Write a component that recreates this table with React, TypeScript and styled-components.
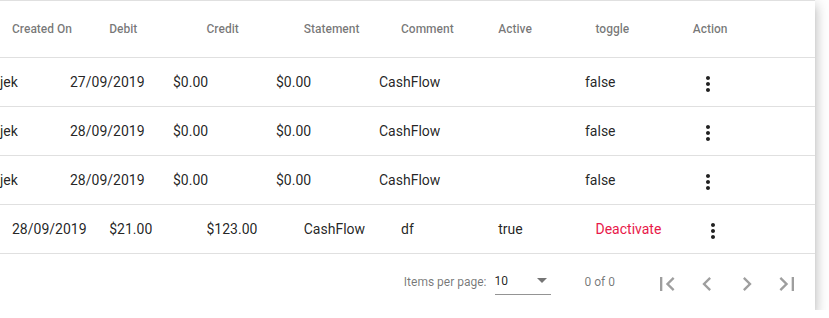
import styled, { createGlobalStyle } from "styled-components";

const GlobalStyle = createGlobalStyle`
  html, body {
    margin: 0;
    padding: 0;
    background: #fff;
    font-family: Roboto, "Helvetica Neue", sans-serif;
  }
`;

const Card = styled.div`
  width: 815px;
  background: #fff;
  border-top: 1px solid rgba(0, 0, 0, 0.12);
  box-shadow: 0 5px 5px -3px rgba(0, 0, 0, 0.2), 0 8px 10px 1px rgba(0, 0, 0, 0.14),
    0 3px 14px 2px rgba(0, 0, 0, 0.12);
`;

const Row = styled.div<{ $header?: boolean; $offset?: number }>`
  display: flex;
  align-items: center;
  height: ${(p) => (p.$header ? 56 : 48)}px;
  padding-left: ${(p) => p.$offset ?? 0}px;
  border-bottom: 1px solid rgba(0, 0, 0, 0.12);
  box-sizing: content-box;
`;

const HeaderCell = styled.div<{ $w: number }>`
  flex: 0 0 ${(p) => p.$w}px;
  font-size: 12px;
  font-weight: 500;
  color: rgba(0, 0, 0, 0.54);
  white-space: nowrap;
`;

const Cell = styled.div<{ $w: number; $warn?: boolean }>`
  flex: 0 0 ${(p) => p.$w}px;
  font-size: 14px;
  color: ${(p) => (p.$warn ? "#e8194a" : "rgba(0, 0, 0, 0.87)")};
  white-space: nowrap;
  display: flex;
  align-items: center;
`;

const IconButton = styled.button`
  width: 40px;
  height: 40px;
  margin-top: 3px;
  padding: 0;
  border: 0;
  background: transparent;
  display: flex;
  align-items: center;
  justify-content: center;
  color: rgba(0, 0, 0, 0.87);
  cursor: pointer;
`;

const Paginator = styled.div`
  display: flex;
  align-items: center;
  justify-content: flex-end;
  height: 56px;
  padding-right: 8px;
  font-size: 12px;
  color: rgba(0, 0, 0, 0.54);
`;

const PageSizeLabel = styled.span`
  margin-right: 8px;
`;

const SelectField = styled.div`
  width: 56px;
  display: flex;
  align-items: center;
  justify-content: space-between;
  padding: 4px 0 6px;
  line-height: 14px;
  border-bottom: 1px solid rgba(0, 0, 0, 0.42);
  color: rgba(0, 0, 0, 0.87);
`;

const Arrow = styled.span`
  width: 0;
  height: 0;
  margin-right: 4px;
  border-left: 5px solid transparent;
  border-right: 5px solid transparent;
  border-top: 5px solid rgba(0, 0, 0, 0.54);
`;

const RangeLabel = styled.span`
  margin: 0 32px 0 34px;
`;

const NavButton = styled.button`
  width: 40px;
  height: 40px;
  padding: 0;
  margin-top: 3px;
  border: 0;
  background: transparent;
  display: flex;
  align-items: center;
  justify-content: center;
  color: rgba(0, 0, 0, 0.38);
`;

const MoreVert = () => (
  <svg width="24" height="24" viewBox="0 0 24 24" fill="currentColor">
    <path d="M12 8c1.1 0 2-.9 2-2s-.9-2-2-2-2 .9-2 2 .9 2 2 2zm0 2c-1.1 0-2 .9-2 2s.9 2 2 2 2-.9 2-2-.9-2-2-2zm0 6c-1.1 0-2 .9-2 2s.9 2 2 2 2-.9 2-2-.9-2-2-2z" />
  </svg>
);

const navIcons = [
  "M18.41 16.59L13.82 12l4.59-4.59L17 6l-6 6 6 6zM6 6h2v12H6z",
  "M15.41 7.41L14 6l-6 6 6 6 1.41-1.41L10.83 12z",
  "M10 6L8.59 7.41 13.17 12l-4.58 4.59L10 18l6-6z",
  "M5.59 7.41L10.18 12l-4.59 4.59L7 18l6-6-6-6zM16 6h2v12h-2z",
];

const headers = ["Created On", "Debit", "Credit", "Statement", "Comment", "Active", "toggle", "Action"];
const COL = 97.25;

const oldRows = [
  { date: "27/09/2019" },
  { date: "28/09/2019" },
  { date: "28/09/2019" },
];

export default function App() {
  return (
    <>
      <GlobalStyle />
      <Card>
        <Row $header $offset={12}>
          {headers.map((h) => (
            <HeaderCell key={h} $w={COL}>
              {h}
            </HeaderCell>
          ))}
        </Row>

        {oldRows.map((r, i) => (
          <Row key={i}>
            <Cell $w={70}>jek</Cell>
            <Cell $w={103}>{r.date}</Cell>
            <Cell $w={103}>$0.00</Cell>
            <Cell $w={103}>$0.00</Cell>
            <Cell $w={103}>CashFlow</Cell>
            <Cell $w={103}></Cell>
            <Cell $w={103}>false</Cell>
            <Cell $w={103}>
              <IconButton>
                <MoreVert />
              </IconButton>
            </Cell>
          </Row>
        ))}

        <Row $offset={12}>
          <Cell $w={COL}>28/09/2019</Cell>
          <Cell $w={COL}>$21.00</Cell>
          <Cell $w={COL}>$123.00</Cell>
          <Cell $w={COL}>CashFlow</Cell>
          <Cell $w={COL}>df</Cell>
          <Cell $w={COL}>true</Cell>
          <Cell $w={COL} $warn>
            Deactivate
          </Cell>
          <Cell $w={COL}>
            <IconButton>
              <MoreVert />
            </IconButton>
          </Cell>
        </Row>

        <Paginator>
          <PageSizeLabel>Items per page:</PageSizeLabel>
          <SelectField>
            <span>10</span>
            <Arrow />
          </SelectField>
          <RangeLabel>0 of 0</RangeLabel>
          {navIcons.map((d) => (
            <NavButton key={d} disabled>
              <svg width="28" height="28" viewBox="0 0 24 24" fill="currentColor">
                <path d={d} />
              </svg>
            </NavButton>
          ))}
        </Paginator>
      </Card>
    </>
  );
}
